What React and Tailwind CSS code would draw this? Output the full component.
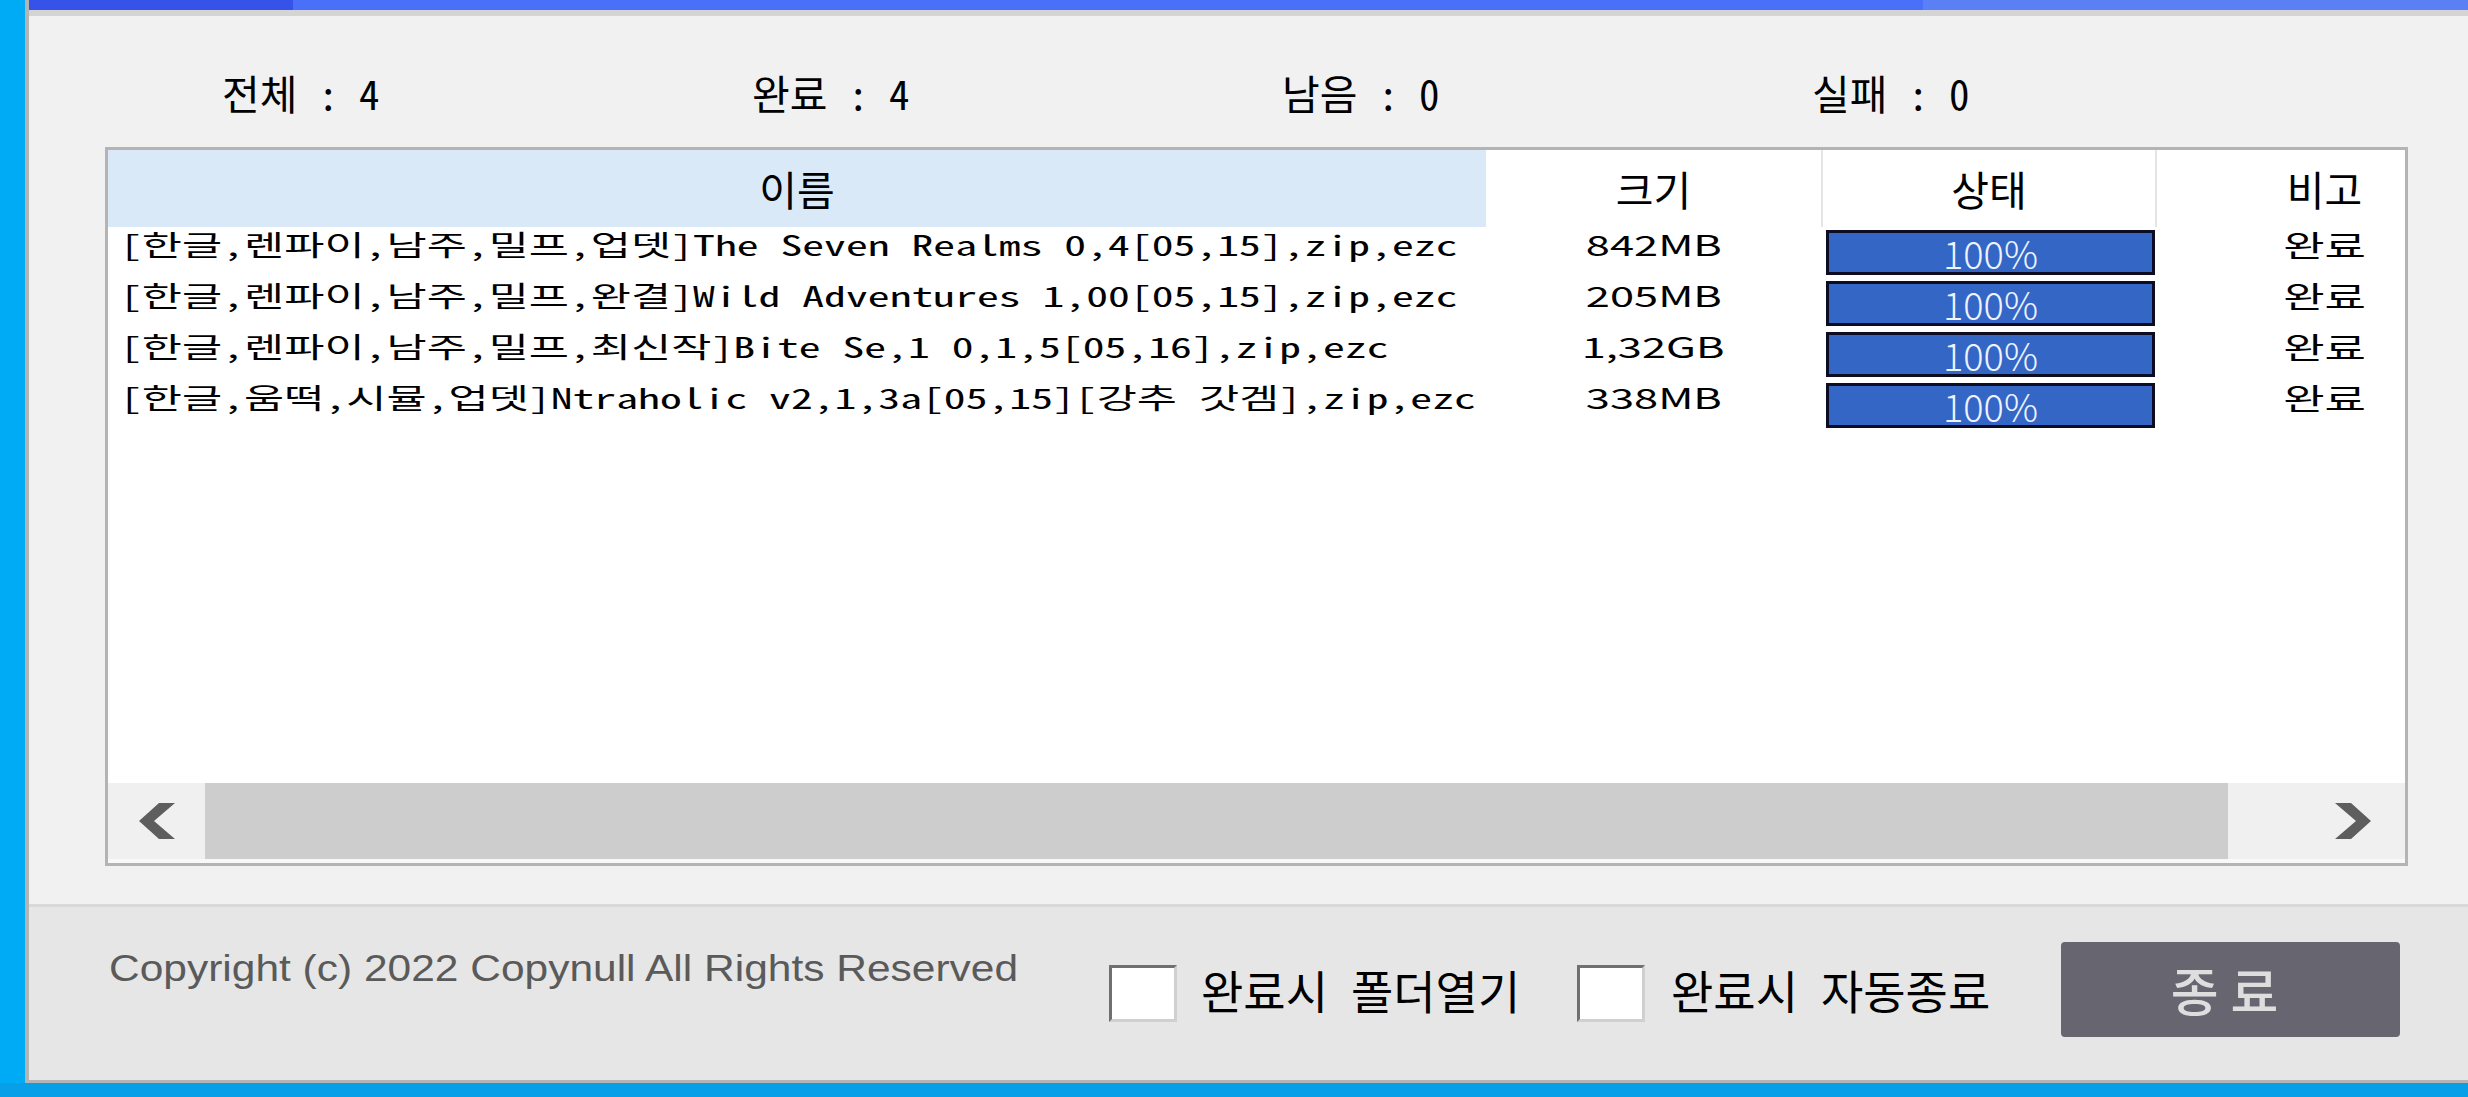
import React from 'react';

const rows = [
  { name: '[한글,렌파이,남주,밀프,업뎃]The Seven Realms 0,4[05,15],zip,ezc', size: '842MB' },
  { name: '[한글,렌파이,남주,밀프,완결]Wild Adventures 1,00[05,15],zip,ezc', size: '205MB' },
  { name: '[한글,렌파이,남주,밀프,최신작]Bite Se,1 0,1,5[05,16],zip,ezc', size: '1,32GB' },
  { name: '[한글,움떡,시뮬,업뎃]Ntraholic v2,1,3a[05,15][강추 갓겜],zip,ezc', size: '338MB' },
];

const stats = ['전체 : 4', '완료 : 4', '남음 : 0', '실패 : 0'];

function ChevronLeft() {
  return (
    <svg width="36" height="36" viewBox="0 0 36 36">
      <polygon points="20,0 36,0 15,18 36,36 20,36 0,18" fill="#5e5e5e" />
    </svg>
  );
}

function ChevronRight() {
  return (
    <svg width="36" height="36" viewBox="0 0 36 36">
      <polygon points="0,0 16,0 36,18 16,36 0,36 21,18" fill="#5e5e5e" />
    </svg>
  );
}

function Checkbox() {
  return (
    <div className="w-[68px] h-[57px] shrink-0 bg-white border-[3px] border-t-[#707070] border-l-[#707070] border-r-[#d0d0d0] border-b-[#d0d0d0]" />
  );
}

function Row({ row }) {
  return (
    <div className="flex h-[51px] shrink-0">
      <div className="w-[1378px] shrink-0 -mt-[4px] overflow-x-clip pl-[12px] leading-[42px] text-[28px] whitespace-nowrap">
        <span className="inline-block origin-left scale-x-[1.56]">{row.name}</span>
      </div>
      <div className="w-[335px] shrink-0 -mt-[4px] flex justify-center leading-[42px] text-[28px] font-['Noto_Sans_CJK_KR',sans-serif]">
        <span className="inline-block origin-center scale-x-[1.55]">{row.size}</span>
      </div>
      <div className="w-[336px] shrink-0 pl-[5px] pt-[3px]">
        <div className="w-[329px] h-[45px] border-[3px] border-[#0c0c22] bg-[#3467c5] flex items-center justify-center text-[38px] leading-none text-[#eef3ff] font-light font-['Noto_Sans_CJK_KR',sans-serif]">
          100%
        </div>
      </div>
      <div className="w-[335px] shrink-0 -mt-[4px] flex justify-center leading-[42px] text-[30px]">
        <span className="inline-block origin-center scale-x-150">완료</span>
      </div>
    </div>
  );
}

export default function App() {
  return (
    <div className="w-[2468px] h-[1097px] overflow-hidden bg-[#00a8f2] flex flex-col text-black font-['Noto_Sans_Mono_CJK_KR','Noto_Sans_CJK_KR',sans-serif]">
      <div className="flex-1 flex min-h-0">
        <div className="w-[25px] shrink-0 bg-[#00abf6]" />
        <div className="flex-1 min-w-0 flex flex-col border-l-4 border-b-[3px] border-[#b4b4b4] bg-[#f1f1f1]">
          {/* title bar edge */}
          <div className="h-[10px] flex shrink-0">
            <div className="w-[264px] bg-[#3553e9]" />
            <div className="w-[1630px] bg-[#4a6ff8]" />
            <div className="flex-1 bg-[#5b7ff5]" />
          </div>
          <div className="h-[6px] bg-[#d4d4d4] shrink-0" />

          <div className="flex-1 flex flex-col min-h-0">
            {/* counters */}
            <div className="h-[131px] shrink-0 pt-[52px] pl-[193px] flex">
              {stats.map((s) => (
                <div key={s} className="w-[530px] shrink-0 text-[41px] leading-[48px] whitespace-pre">
                  {s}
                </div>
              ))}
            </div>

            {/* file list */}
            <div className="ml-[76px] w-[2303px] h-[719px] shrink-0 border-[3px] border-[#b4b4b4] bg-white flex flex-col overflow-hidden">
              <div className="h-[77px] shrink-0 flex text-[41px]">
                <div className="w-[1378px] shrink-0 bg-[#d9e9f7] flex items-center justify-center">이름</div>
                <div className="w-[335px] shrink-0 flex items-center justify-center">크기</div>
                <div className="w-[2px] shrink-0 bg-[#e5e5e5]" />
                <div className="w-[332px] shrink-0 flex items-center justify-center">상태</div>
                <div className="w-[2px] shrink-0 bg-[#e5e5e5]" />
                <div className="w-[335px] shrink-0 flex items-center justify-center">비고</div>
              </div>

              <div className="flex-1 min-h-0 flex flex-col">
                {rows.map((r) => (
                  <Row key={r.name} row={r} />
                ))}
              </div>

              <div className="h-[76px] shrink-0 flex">
                <div className="w-[97px] shrink-0 bg-[#f0f0f0] flex items-center justify-center">
                  <ChevronLeft />
                </div>
                <div className="w-[2023px] shrink-0 bg-[#cdcdcd]" />
                <div className="flex-1 bg-[#f0f0f0] flex items-center justify-end pr-[34px]">
                  <ChevronRight />
                </div>
              </div>
              <div className="h-[4px] shrink-0 bg-[#f8f8f8]" />
            </div>
          </div>

          {/* footer */}
          <div className="h-[176px] shrink-0 border-t-[3px] border-[#d9d9d9] bg-[#e6e6e6] flex items-center pl-[80px]">
            <div className="w-[1000px] shrink-0 mb-[49px] text-[36px] leading-[44px] text-[#5a5a5a] font-['Liberation_Sans',Arial,sans-serif] whitespace-nowrap">
              <span className="inline-block origin-left scale-x-[1.18]">Copyright (c) 2022 Copynull All Rights Reserved</span>
            </div>
            <Checkbox />
            <div className="w-[400px] shrink-0 pl-[24px] mb-[10px] text-[46px] leading-[56px] whitespace-pre">완료시 폴더열기</div>
            <Checkbox />
            <div className="w-[416px] shrink-0 pl-[26px] mb-[10px] text-[46px] leading-[56px] whitespace-pre">완료시 자동종료</div>
            <div className="w-[339px] h-[95px] shrink-0 mb-[8px] rounded-[4px] bg-[#676570] flex items-center justify-center text-[52px] tracking-[12px] font-medium text-[#dedede] font-['Noto_Sans_CJK_KR',sans-serif]">
              종료
            </div>
          </div>
        </div>
      </div>
      <div className="h-[14px] shrink-0 bg-[#089fe9]" />
    </div>
  );
}
